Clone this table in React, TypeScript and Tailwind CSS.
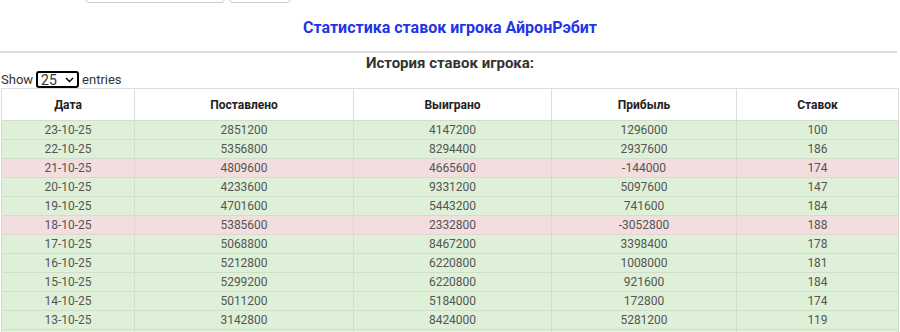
const rows: [string, string, string, string, string][] = [
  ['23-10-25', '2851200', '4147200', '1296000', '100'],
  ['22-10-25', '5356800', '8294400', '2937600', '186'],
  ['21-10-25', '4809600', '4665600', '-144000', '174'],
  ['20-10-25', '4233600', '9331200', '5097600', '147'],
  ['19-10-25', '4701600', '5443200', '741600', '184'],
  ['18-10-25', '5385600', '2332800', '-3052800', '188'],
  ['17-10-25', '5068800', '8467200', '3398400', '178'],
  ['16-10-25', '5212800', '6220800', '1008000', '181'],
  ['15-10-25', '5299200', '6220800', '921600', '184'],
  ['14-10-25', '5011200', '5184000', '172800', '174'],
  ['13-10-25', '3142800', '8424000', '5281200', '119'],
  ['12-10-25', '4118400', '5068800', '950400', '160'],
];

export default function App() {
  return (
    <div className="w-[900px] h-[332px] overflow-hidden bg-white font-['Roboto',sans-serif] text-[#333]">
      {/* Поиск сверху (обрезан) */}
      <div className="flex gap-1 pl-[85px] -mt-[20px]">
        <div className="w-[140px] h-[23px] border border-[#ccc] rounded-sm"></div>
        <div className="w-[62px] h-[23px] border border-[#ccc] rounded-sm"></div>
      </div>

      <h2 className="text-center text-[16px] font-bold text-[#1f35e6] mt-[15px] leading-[20px]">
        Статистика ставок игрока АйронРэбит
      </h2>

      <hr className="mt-[13px] mr-[3px] border-t-2 border-[#ddd]" />

      <h3 className="text-center text-[15px] font-bold text-[#333] leading-[18px] mt-[1px]">
        История ставок игрока:
      </h3>

      <div className="flex items-center text-[13px] text-[#333] leading-[16px] h-[17px] -mt-[1px]">
        <span className="pl-[1px]">Show</span>
        <span className="mx-[3px] flex items-center justify-between w-[43px] h-[17px] border-2 border-black rounded-[3px] pl-[3px] pr-[2px] text-[14px]">
          25
          <svg width="9" height="6" viewBox="0 0 9 6" className="mr-[1px]">
            <path d="M1 1l3.5 3.5L8 1" stroke="#000" strokeWidth="1.4" fill="none" />
          </svg>
        </span>
        <span>entries</span>
      </div>

      <table className="ml-[1px] w-[897px] border-collapse table-fixed text-[12px]">
        <colgroup>
          <col className="w-[133px]" />
          <col className="w-[219px]" />
          <col className="w-[198px]" />
          <col className="w-[185px]" />
          <col className="w-[162px]" />
        </colgroup>
        <thead>
          <tr className="h-[32px] border-b border-[#666]">
            {['Дата', 'Поставлено', 'Выиграно', 'Прибыль', 'Ставок'].map((h) => (
              <th
                key={h}
                className="border-l border-r border-t border-[#ddd] font-bold text-[#222] text-center p-0"
              >
                {h}
              </th>
            ))}
          </tr>
        </thead>
        <tbody>
          {rows.map((r) => {
            const loss = r[3].startsWith('-');
            return (
              <tr key={r[0]} className={`h-[19px] ${loss ? 'bg-[#f2dede]' : 'bg-[#dff0d8]'}`}>
                {r.map((c, i) => (
                  <td
                    key={i}
                    className={`border ${loss ? 'border-[#e6d3d3]' : 'border-[#cfdfca]'} text-center text-[#555] p-0 leading-[18px]`}
                  >
                    {c}
                  </td>
                ))}
              </tr>
            );
          })}
        </tbody>
      </table>
    </div>
  );
}
